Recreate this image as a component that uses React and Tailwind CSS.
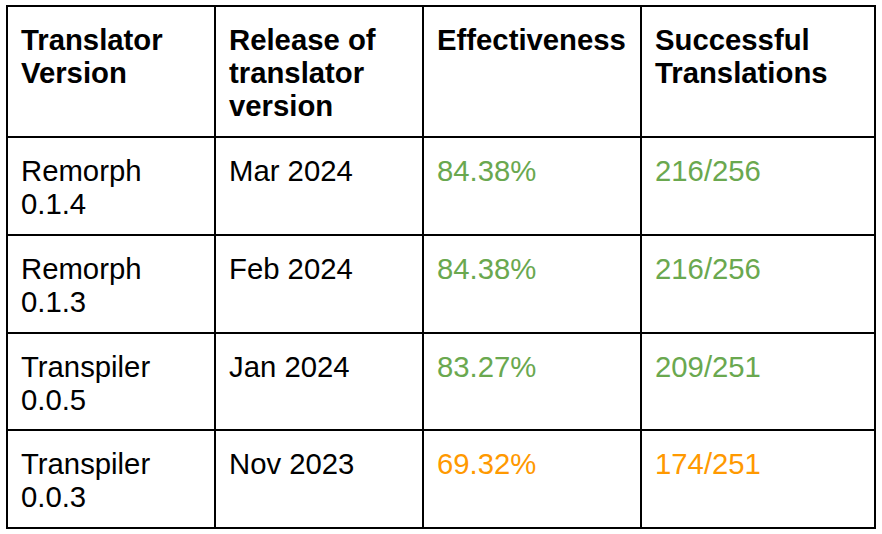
import React from "react";

const GREEN = "text-[#6aa84f]";
const ORANGE = "text-[#ff9900]";

const rows = [
  { name: ["Remorph", "0.1.4"], date: "Mar 2024", eff: "84.38%", ok: "216/256", color: GREEN, h: "h-[98px]" },
  { name: ["Remorph", "0.1.3"], date: "Feb 2024", eff: "84.38%", ok: "216/256", color: GREEN, h: "h-[98px]" },
  { name: ["Transpiler", "0.0.5"], date: "Jan 2024", eff: "83.27%", ok: "209/251", color: GREEN, h: "h-[97px]" },
  { name: ["Transpiler", "0.0.3"], date: "Nov 2023", eff: "69.32%", ok: "174/251", color: ORANGE, h: "h-[98px]" },
];

const cell = "border-2 border-black align-top pl-[13px] pr-1 pt-[16px] pb-0";

export default function App() {
  return (
    <div className="w-[882px] h-[534px] bg-white pt-[5px] pl-[6px] text-black" style={{ fontFamily: '"Liberation Sans", Arial, sans-serif' }}>
      <table className="table-fixed border-collapse text-[29.3px] leading-[33px]">
        <colgroup>
          <col className="w-[208px]" />
          <col className="w-[208px]" />
          <col className="w-[218px]" />
          <col className="w-[234px]" />
        </colgroup>
        <thead>
          <tr className="h-[131px]">
            <th className={`${cell} text-left font-bold`}>Translator<br />Version</th>
            <th className={`${cell} text-left font-bold`}>Release of<br />translator<br />version</th>
            <th className={`${cell} text-left font-bold`}>Effectiveness</th>
            <th className={`${cell} text-left font-bold`}>Successful<br />Translations</th>
          </tr>
        </thead>
        <tbody>
          {rows.map((r, i) => (
            <tr key={i} className={r.h}>
              <td className={cell}>{r.name[0]}<br />{r.name[1]}</td>
              <td className={cell}>{r.date}</td>
              <td className={`${cell} ${r.color}`}>{r.eff}</td>
              <td className={`${cell} ${r.color}`}>{r.ok}</td>
            </tr>
          ))}
        </tbody>
      </table>
    </div>
  );
}
